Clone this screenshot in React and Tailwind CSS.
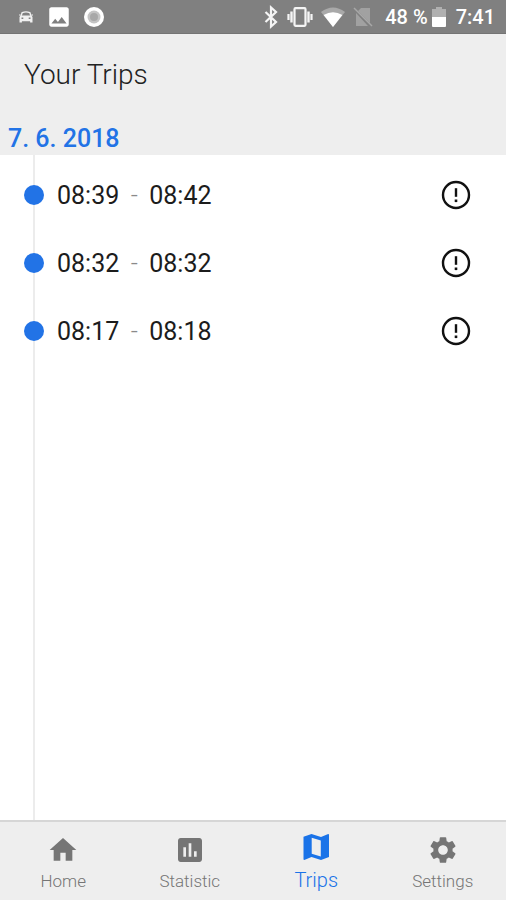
import { MdHome, MdImage, MdInsertChart, MdSettings } from "react-icons/md";

const trips = [
  { id: 1, start: "08:39", end: "08:42" },
  { id: 2, start: "08:32", end: "08:32" },
  { id: 3, start: "08:17", end: "08:18" },
];

const tabs = [
  { label: "Home", icon: MdHome },
  { label: "Statistic", icon: MdInsertChart },
  { label: "Trips", icon: MapIcon, active: true },
  { label: "Settings", icon: MdSettings },
];

function MapIcon({ className }) {
  return (
    <svg viewBox="0 0 34 34" className={className} fill="currentColor">
      <path
        fillRule="evenodd"
        d="M4.5 6.8L12.5 4L22 7L29.2 4Q30 4 30 4.8V27L22 30L12.5 27L5.3 30Q4.5 30 4.5 29.2zM12.7 7.7V23.7L21.8 26.5V10.5z"
      />
    </svg>
  );
}

function CarIcon() {
  return (
    <svg viewBox="0 0 16 14" className="h-[14px] w-4" fill="none" stroke="#f0f0f0">
      <path d="M3 6L4.2 2.6Q8 1.2 11.8 2.6L13 6" strokeWidth="1.4" />
      <path d="M1 5h1.5M13.5 5H15" strokeWidth="1.2" />
      <path
        fill="#f0f0f0"
        stroke="none"
        fillRule="evenodd"
        d="M2.5 5.5h11l1 1.5v5.5h-2.4v-1.3H3.9v1.3H1.5V7zM3.5 7.6v1.4h1.8V7.6zM10.7 7.6v1.4h1.8V7.6z"
      />
    </svg>
  );
}

function BluetoothIcon() {
  return (
    <svg viewBox="0 0 24 24" className="h-6 w-6" fill="none" stroke="#f5f5f5">
      <path d="M6.5 7L17 17L12 21.5V2.500L17 7L6.500 17" strokeWidth="2.2" />
    </svg>
  );
}

function VibrateIcon() {
  return (
    <svg viewBox="0 0 26 20" className="h-5 w-[26px]" fill="none" stroke="#f5f5f5">
      <rect x="7.5" y="1.2" width="11" height="17.6" rx="1" strokeWidth="2.2" />
      <path d="M4.5 4.5v11M21.5 4.5v11" strokeWidth="2.4" />
      <path d="M1.5 7v6M24.5 7v6" strokeWidth="2.2" />
    </svg>
  );
}

function WifiIcon() {
  return (
    <svg viewBox="0 0 24 20" className="h-5 w-6">
      <path d="M0 5Q12-4 24 5L12 20z" fill="#a9a9a9" />
      <path d="M2.6 8Q12 2.5 21.4 8L12 20z" fill="#fff" />
    </svg>
  );
}

function NoSimIcon() {
  return (
    <svg viewBox="0 0 20 20" className="h-5 w-5">
      <path d="M8 1h9v15L5 4zM3 6l12 13H3z" fill="#a1a1a1" />
      <path d="M1 1l18 18" stroke="#a8a8a8" strokeWidth="1.5" />
    </svg>
  );
}

function BatteryIcon() {
  return (
    <svg viewBox="0 0 14 20" className="h-5 w-[14px]">
      <path d="M4 0h6v2h4v9H0V2h4z" fill="#b0b0b0" />
      <path d="M0 10h14v9a1 1 0 0 1-1 1H1a1 1 0 0 1-1-1z" fill="#fff" />
    </svg>
  );
}

function AlertIcon() {
  return (
    <svg viewBox="0 0 30 30" className="h-[30px] w-[30px]" fill="none" stroke="currentColor">
      <circle cx="15" cy="15" r="13" strokeWidth="2.4" />
      <path d="M15 8.2v8.6" strokeWidth="2.4" />
      <path d="M15 19.5v2.6" strokeWidth="2.6" />
    </svg>
  );
}

function StatusBar() {
  return (
    <div className="flex h-[34px] items-center justify-between border-b border-[#747474] bg-[#808080] pr-[11px] pl-[18px] text-white">
      <div className="flex items-center gap-3">
        <CarIcon />
        <MdImage className="h-[26px] w-[26px]" />
        <svg viewBox="0 0 20 20" className="h-5 w-5">
          <circle cx="10" cy="10" r="10" fill="#fff" />
          <circle cx="10" cy="10" r="6.5" fill="#c4c4c4" />
          <circle cx="10" cy="10" r="4" fill="#a8a8a8" />
        </svg>
      </div>
      <div className="flex items-center">
        <BluetoothIcon />
        <div className="ml-1 flex gap-2">
          <VibrateIcon />
          <WifiIcon />
          <NoSimIcon />
        </div>
        <span className="ml-3 text-xl font-medium">48 %</span>
        <span className="ml-1">
          <BatteryIcon />
        </span>
        <span className="ml-2.5 text-xl font-medium">7:41</span>
      </div>
    </div>
  );
}

function TripRow({ start, end }) {
  return (
    <li className="relative flex h-[68px] items-center pr-[35px] pl-6">
      <span className="h-5 w-5 rounded-full bg-[#2273e6]" />
      <span className="ml-[13px] flex pt-0.5 text-[25px] text-[#1c1c1c]">
        {start}
        <span className="w-[30px] text-center font-light text-[#8a8a8a]">-</span>
        {end}
      </span>
      <button type="button" aria-label="Trip details" className="ml-auto text-[#111]">
        <AlertIcon />
      </button>
    </li>
  );
}

export default function App() {
  return (
    <div className="flex min-h-screen flex-col bg-white font-[Roboto,sans-serif]">
      <StatusBar />

      <header className="bg-[#eeeeee]">
        <h1 className="px-6 pt-[25px] text-[28px] leading-8 font-light text-[#222]">Your Trips</h1>
        <h2 className="px-2 pt-[33px] pb-px text-[25px] leading-[30px] font-medium text-[#2273e6]">
          7. 6. 2018
        </h2>
      </header>

      <main className="relative flex-1">
        {/* Timeline line behind the dots */}
        <div className="absolute inset-y-0 left-[33px] w-0.5 bg-[#ececec]" />
        <ul className="pt-1.5">
          {trips.map((trip) => (
            <TripRow key={trip.id} start={trip.start} end={trip.end} />
          ))}
        </ul>
      </main>

      <nav className="grid h-20 grid-cols-4 border-t-2 border-[#d6d6d6] bg-[#eeeeee]">
        {tabs.map(({ label, icon: Icon, active }) => (
          <button
            key={label}
            type="button"
            className={
              active
                ? "flex flex-col items-center pt-2 text-[#1a73e8]"
                : "flex flex-col items-center pt-3 text-[#757575]"
            }
          >
            <Icon className={active ? "h-[34px] w-[34px]" : "h-8 w-8"} />
            <span
              className={
                active
                  ? "text-xl leading-8 font-light"
                  : "text-[17px] leading-[30px] font-light"
              }
            >
              {label}
            </span>
          </button>
        ))}
      </nav>
    </div>
  );
}
